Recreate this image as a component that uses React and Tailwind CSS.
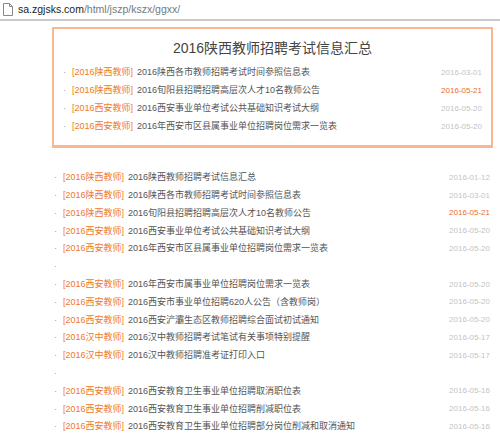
const FONT = { fontFamily: '"Liberation Sans", "Noto Sans CJK SC", sans-serif' };

const boxRows = [
  { tag: "[2016陕西教师]", title: "2016陕西各市教师招聘考试时间参照信息表", date: "2016-03-01" },
  { tag: "[2016陕西教师]", title: "2016旬阳县招聘招聘高层次人才10名教师公告", date: "2016-05-21", hot: true },
  { tag: "[2016西安教师]", title: "2016西安事业单位考试公共基础知识考试大纲", date: "2016-05-20" },
  { tag: "[2016西安教师]", title: "2016年西安市区县属事业单位招聘岗位需求一览表", date: "2016-05-20" },
];

const listRows = [
  { tag: "[2016陕西教师]", title: "2016陕西教师招聘考试信息汇总", date: "2016-01-12" },
  { tag: "[2016陕西教师]", title: "2016陕西各市教师招聘考试时间参照信息表", date: "2016-03-01" },
  { tag: "[2016陕西教师]", title: "2016旬阳县招聘招聘高层次人才10名教师公告", date: "2016-05-21", hot: true },
  { tag: "[2016西安教师]", title: "2016西安事业单位考试公共基础知识考试大纲", date: "2016-05-20" },
  { tag: "[2016西安教师]", title: "2016年西安市区县属事业单位招聘岗位需求一览表", date: "2016-05-20" },
  null,
  { tag: "[2016西安教师]", title: "2016年西安市属事业单位招聘岗位需求一览表", date: "2016-05-20" },
  { tag: "[2016西安教师]", title: "2016西安市事业单位招聘620人公告（含教师岗）", date: "2016-05-20" },
  { tag: "[2016西安教师]", title: "2016西安浐灞生态区教师招聘综合面试初试通知", date: "2016-05-20" },
  { tag: "[2016汉中教师]", title: "2016汉中教师招聘考试笔试有关事项特别提醒", date: "2016-05-17" },
  { tag: "[2016汉中教师]", title: "2016汉中教师招聘准考证打印入口", date: "2016-05-17" },
  null,
  { tag: "[2016西安教师]", title: "2016西安教育卫生事业单位招聘取消职位表", date: "2016-05-16" },
  { tag: "[2016西安教师]", title: "2016西安教育卫生事业单位招聘削减职位表", date: "2016-05-16" },
  { tag: "[2016西安教师]", title: "2016西安教育卫生事业单位招聘部分岗位削减和取消通知", date: "2016-05-16" },
];

const NewsRow = ({ row, height }) => (
  <li className={`flex items-center ${height} text-[9px]`}>
    <span className="w-[9px] shrink-0 text-[#999]">·</span>
    {row && (
      <>
        <span className="shrink-0 text-[#f0782a]">{row.tag}</span>
        <span className="ml-[4px] flex-1 truncate text-[#555]">{row.title}</span>
        <span
          className={`shrink-0 text-[8px] ${row.hot ? "text-[#ee6d1e]" : "text-[#c4c4c4]"}`}
        >
          {row.date}
        </span>
      </>
    )}
  </li>
);

const App = () => {
  return (
    <div className="h-[433px] w-[500px] overflow-hidden bg-white" style={FONT}>
      <div className="flex h-[21px] items-center border-b-2 border-[#c9c9c9] bg-white pl-[3px]">
        <svg width="10" height="13" viewBox="0 0 10 13" className="shrink-0">
          <path d="M0.5 0.5h6l3 3v9h-9z" fill="white" stroke="#888" />
          <path d="M6.5 0.5v3h3" fill="none" stroke="#888" />
        </svg>
        <span className="ml-[5px] text-[10.5px] leading-none text-[#222]">
          sa.zgjsks.com<span className="text-[#6f7d7d]">/html/jszp/kszx/ggxx/</span>
        </span>
      </div>

      <div className="pl-[52px] pr-[7px] pt-[6px]">
        <section className="border-2 border-b-[3px] border-[#f8b790] px-[9px] pb-[9px] pt-[9px]">
          <h1 className="flex h-[20px] items-center justify-center text-[14px] text-[#444]">
            2016陕西教师招聘考试信息汇总
          </h1>
          <ul className="mt-[6px]">
            {boxRows.map((row) => (
              <NewsRow key={row.title} row={row} height="h-[18px]" />
            ))}
          </ul>
        </section>
      </div>

      <ul className="mt-[21px] pl-[54px] pr-[10px]">
        {listRows.map((row, i) => (
          <NewsRow key={i} row={row} height="h-[17.8px]" />
        ))}
      </ul>
    </div>
  );
};

export default App;
